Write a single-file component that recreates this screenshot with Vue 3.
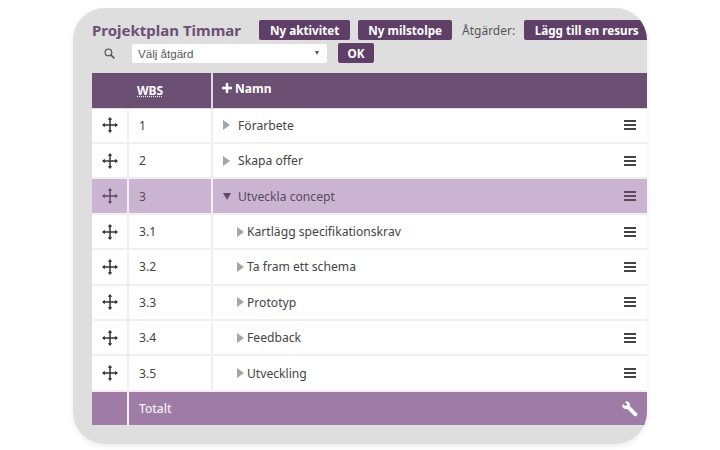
<template>
  <div class="page">
    <div class="card">
      <div class="toolbar">
        <h1 class="title">Projektplan Timmar</h1>
        <button class="btn first">Ny aktivitet</button>
        <button class="btn second">Ny milstolpe</button>
        <span class="label">Åtgärder:</span>
        <button class="btn resource">Lägg till en resurs</button>
      </div>
      <div class="actions">
        <svg class="search" viewBox="0 0 12 12" width="11" height="11">
          <circle cx="4.8" cy="4.8" r="3.7" fill="none" stroke="#555" stroke-width="1.2" />
          <path d="M7.5 7.5 11.300 11.300" stroke="#555" stroke-width="1.7" />
        </svg>
        <div class="select">
          <span>Välj åtgärd</span>
          <span class="caret"></span>
        </div>
        <button class="btn ok">OK</button>
      </div>

      <div class="table">
        <div class="head">
          <div class="cell wbs"><span>WBS</span></div>
          <div class="cell name">
            <svg viewBox="0 0 10 10" width="10" height="10">
              <path d="M5 0v10M0 5h10" stroke="#fff" stroke-width="2.4" />
            </svg>
            Namn
          </div>
        </div>

        <div v-for="row in rows" :key="row.wbs" class="row" :class="{ active: row.active }">
          <div class="cell move">
            <svg viewBox="0 0 16 16" width="16" height="16">
              <path d="M8 2v12M2 8h12" stroke="currentColor" stroke-width="1.5" />
              <path d="M8 0 5.7 2.8h4.6zM8 16l-2.3-2.8h4.6zM0 8l2.8-2.3v4.6zM16 8l-2.8-2.3v4.6z" fill="currentColor" />
            </svg>
          </div>
          <div class="cell num">{{ row.wbs }}</div>
          <div class="cell task" :class="{ child: row.child }">
            <span class="arrow" :class="{ open: row.active }"></span>
            <span class="task-name">{{ row.name }}</span>
            <span class="menu"><i></i><i></i><i></i></span>
          </div>
        </div>

        <div class="total">
          <div class="cell"></div>
          <div class="cell total-label">
            Totalt
            <svg class="wrench" viewBox="0 0 16 16" width="16" height="16">
              <path d="M1 2.900 3.400 5.200 5.300 3.400 3 1C4.900.2 6.800.7 7.600 2.200c.5.900.5 1.900.2 2.800l7.200 7.300c.6.600.6 1.500 0 2.100l-.6.600c-.6.600-1.500.6-2.100 0L5 7.800c-2.200.8-4.300-.4-4.600-2.500-.1-.8.100-1.600.6-2.400z" fill="#fff" />
            </svg>
          </div>
        </div>
      </div>
    </div>
  </div>
</template>

<script setup>
const rows = [
  { wbs: '1', name: 'Förarbete' },
  { wbs: '2', name: 'Skapa offer' },
  { wbs: '3', name: 'Utveckla concept', active: true },
  { wbs: '3.1', name: 'Kartlägg specifikationskrav', child: true },
  { wbs: '3.2', name: 'Ta fram ett schema', child: true },
  { wbs: '3.3', name: 'Prototyp', child: true },
  { wbs: '3.4', name: 'Feedback', child: true },
  { wbs: '3.5', name: 'Utveckling', child: true },
];
</script>

<style scoped>
.page {
  width: 720px;
  height: 450px;
  padding: 8px 0 0 73px;
  box-sizing: border-box;
  background: #fff;
  font-family: "Noto Sans", sans-serif;
}

.card {
  width: 574px;
  height: 436px;
  padding: 12px 0 0 19px;
  box-sizing: border-box;
  background: #dedede;
  border-radius: 32px;
  box-shadow: 0 2px 6px rgba(0, 0, 0, 0.08);
  overflow: hidden;
}

.toolbar {
  display: flex;
  align-items: center;
  height: 20px;
  white-space: nowrap;
}

.title {
  margin: 0 18px 0 0;
  font-size: 15px;
  font-weight: 700;
  color: #6d5074;
}

.btn {
  flex: none;
  height: 20px;
  padding: 0 10.500px;
  border: 0;
  border-radius: 2px;
  background: #5f3f68;
  color: #fff;
  font-family: inherit;
  font-size: 11.700px;
  font-weight: 700;
  line-height: 20px;
}

.first {
  margin-right: 8px;
  padding: 0 11px;
}

.second {
  padding: 0 10px;
}

.label {
  margin: 0 9px 0 10px;
  font-size: 12px;
  color: #555;
}

.actions {
  display: flex;
  align-items: center;
  height: 20px;
  margin-top: 3px;
}

.search {
  margin: 0 17px 0 12px;
}

.select {
  display: flex;
  align-items: center;
  justify-content: space-between;
  width: 195px;
  height: 19px;
  padding: 0 8px 0 6px;
  box-sizing: border-box;
  border-radius: 2px;
  background: #fff;
  font-family: "Liberation Sans", sans-serif;
  font-size: 11.600px;
  color: #555;
}

.caret {
  border-left: 2.500px solid transparent;
  border-right: 2.500px solid transparent;
  border-top: 4px solid #555;
}

.ok {
  margin-left: 11px;
  width: 36px;
  padding: 0;
}

.table {
  margin-top: 10px;
}

.head,
.row,
.total {
  display: grid;
}

.head {
  grid-template-columns: 121px 1fr;
  height: 35.700px;
  box-sizing: border-box;
  background: #6b5073;
  border-bottom: 1.500px solid #e2d8e5;
}

.head .wbs {
  display: flex;
  align-items: center;
  padding-left: 45px;
  border-right: 2px solid #e2d8e5;
  font-size: 12px;
  font-weight: 700;
  color: #fff;
}

.wbs span {
  text-decoration: underline dotted;
}

.name {
  display: flex;
  align-items: center;
  gap: 3px;
  padding: 0 0 4px 9px;
  font-size: 12px;
  font-weight: 700;
  color: #fff;
}

.row {
  grid-template-columns: 35px 82px 1fr;
  column-gap: 2px;
  height: 35.400px;
  box-sizing: border-box;
  background: #f0f0f0;
  padding-bottom: 2px;
  color: #444;
}

.row .cell {
  display: flex;
  align-items: center;
  background: #fff;
  font-size: 12.150px;
}

.row.active {
  background: #f3eef4;
  color: #5b4a60;
}

.row.active .cell {
  background: #cbb4d2;
}

.move {
  justify-content: center;
  color: #333;
}

.row.active .move {
  color: #5b4a60;
}

.num {
  padding-left: 10px;
}

.task {
  padding: 0 11px 0 10px;
}

.task.child {
  padding-left: 24px;
}

.arrow {
  margin-right: 8px;
  border-top: 5px solid transparent;
  border-bottom: 5px solid transparent;
  border-left: 7px solid #a5a5a5;
}

.child .arrow {
  margin-right: 3px;
}

.arrow.open {
  margin-right: 7px;
  border-left: 4.500px solid transparent;
  border-right: 4.500px solid transparent;
  border-top: 7px solid #65486f;
  border-bottom: 0;
}

.menu {
  display: flex;
  flex-direction: column;
  gap: 2px;
  width: 12px;
  margin-left: auto;
}

.menu i {
  height: 2px;
  background: currentColor;
}

.total {
  grid-template-columns: 37px 1fr;
  height: 34.500px;
  box-sizing: border-box;
  background: #9e7ca5;
  border-bottom: 1px solid #e6dfe8;
}

.total .cell:first-child {
  border-right: 2px solid #f3eef4;
}

.total-label {
  display: flex;
  align-items: center;
  justify-content: space-between;
  padding: 0 9px 0 10px;
  font-size: 12px;
  font-weight: 500;
  color: #f5eff6;
}
</style>
